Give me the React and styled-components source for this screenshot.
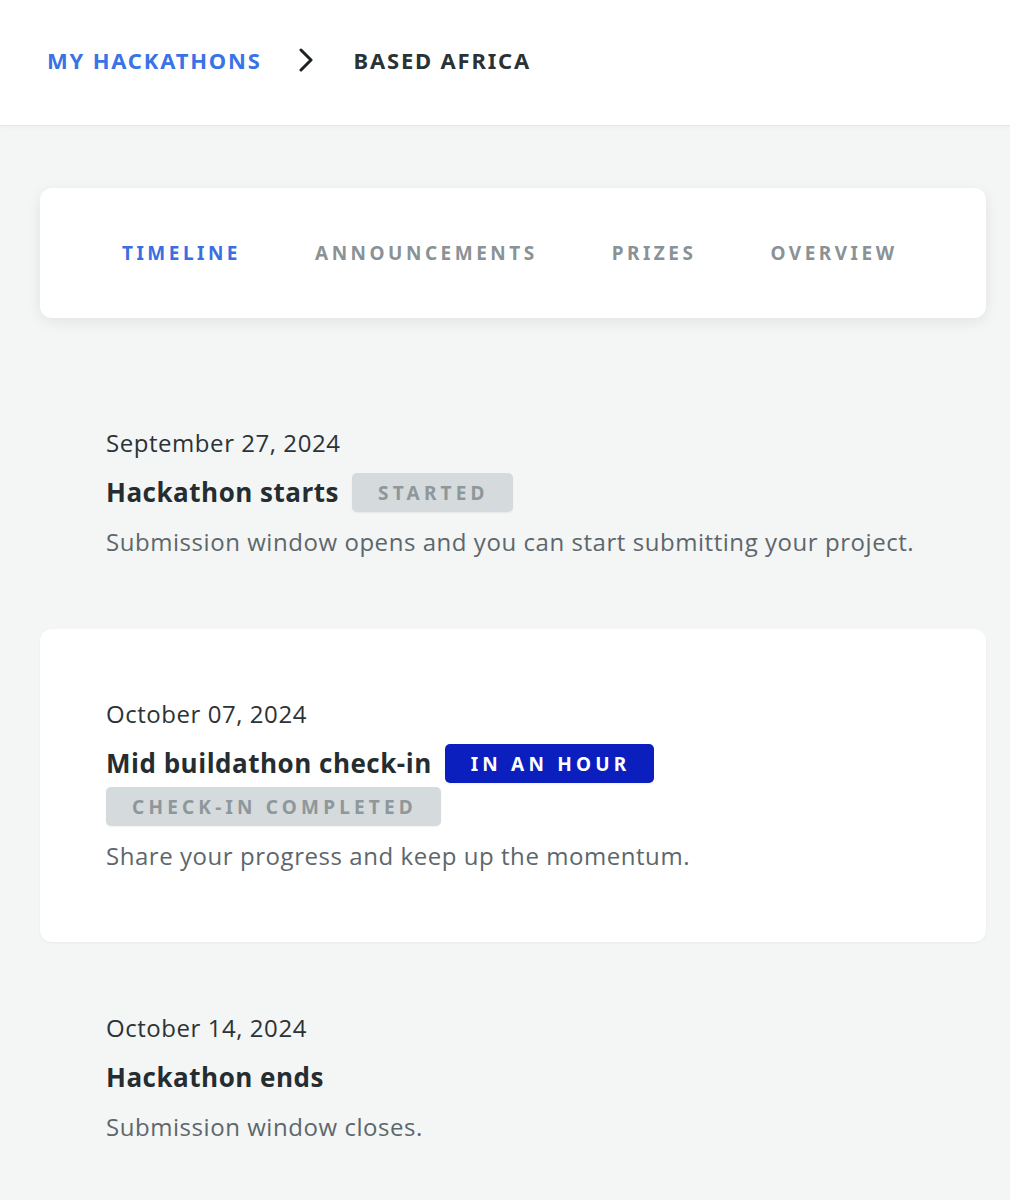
import React from "react";
import styled, { createGlobalStyle } from "styled-components";

const GlobalStyle = createGlobalStyle`
  html, body {
    margin: 0;
    padding: 0;
    background: #f4f5f5;
  }
  * {
    box-sizing: border-box;
  }
`;

const tabs = ["Timeline", "Announcements", "Prizes", "Overview"];

const events = [
  {
    date: "September 27, 2024",
    title: "Hackathon starts",
    badges: [{ label: "Started", tone: "muted" }],
    text: "Submission window opens and you can start submitting your project.",
  },
  {
    date: "October 07, 2024",
    title: "Mid buildathon check-in",
    badges: [
      { label: "In an hour", tone: "primary" },
      { label: "Check-in completed", tone: "muted" },
    ],
    text: "Share your progress and keep up the momentum.",
    active: true,
  },
  {
    date: "October 14, 2024",
    title: "Hackathon ends",
    badges: [],
    text: "Submission window closes.",
  },
];

const App = () => {
  return (
    <Page>
      <GlobalStyle />
      <Header>
        <Crumb $link>My Hackathons</Crumb>
        <Chevron width="16" height="24" viewBox="0 0 16 24">
          <polyline points="3,2 13,12 3,22" />
        </Chevron>
        <Crumb>Based Africa</Crumb>
      </Header>

      <Content>
        <TabBar>
          {tabs.map((tab, i) => (
            <Tab key={tab} $active={i === 0}>
              {tab}
            </Tab>
          ))}
        </TabBar>

        <Timeline>
          {events.map((ev) => (
            <Event key={ev.title} $active={ev.active}>
              <EventDate>{ev.date}</EventDate>
              <TitleRow>
                <EventTitle>{ev.title}</EventTitle>
                {ev.badges.map((b) => (
                  <Badge key={b.label} $tone={b.tone}>
                    {b.label}
                  </Badge>
                ))}
              </TitleRow>
              <EventText>{ev.text}</EventText>
            </Event>
          ))}
        </Timeline>
      </Content>
    </Page>
  );
};

export default App;

const Page = styled.div`
  min-height: 1200px;
  background: #f4f5f5;
`;

const Header = styled.header`
  display: flex;
  align-items: center;
  height: 126px;
  padding: 0 47px 6px;
  background: #ffffff;
  border-bottom: 1px solid #e6e8e8;
  box-shadow: 0 1px 4px rgba(0, 0, 0, 0.04);
`;

const Crumb = styled.span`
  font-family: "Noto Sans", "DejaVu Sans", sans-serif;
  font-weight: 700;
  font-size: 22px;
  letter-spacing: 1.8px;
  text-transform: uppercase;
  color: ${(p) => (p.$link ? "#3a73e6" : "#2a3235")};
`;

const Chevron = styled.svg`
  margin: 0 40px 0 36px;
  fill: none;
  stroke: #1d2224;
  stroke-width: 3;
  stroke-linecap: round;
  stroke-linejoin: round;
`;

const Content = styled.main`
  padding: 62px 24px 0 40px;
`;

const TabBar = styled.nav`
  display: flex;
  align-items: center;
  gap: 74px;
  height: 130px;
  padding: 0 82px;
  background: #ffffff;
  border-radius: 12px;
  box-shadow: 0 4px 14px rgba(30, 40, 45, 0.08);
`;

const Tab = styled.span`
  font-family: "Noto Sans", "DejaVu Sans", sans-serif;
  font-weight: 700;
  font-size: 19px;
  letter-spacing: 3.5px;
  text-transform: uppercase;
  color: ${(p) => (p.$active ? "#3a6fe2" : "#8a9296")};
`;

const Timeline = styled.section`
  display: flex;
  flex-direction: column;
  gap: 1px;
  margin-top: 40px;
`;

const Event = styled.article`
  padding: 70px 66px 71px;
  border-radius: 12px;
  background: ${(p) => (p.$active ? "#ffffff" : "transparent")};
  box-shadow: ${(p) =>
    p.$active ? "0 1px 3px rgba(30, 40, 45, 0.05)" : "none"};
`;

const EventDate = styled.div`
  font-family: "Open Sans", "Noto Sans", sans-serif;
  font-size: 24px;
  line-height: 30px;
  letter-spacing: 0.55px;
  color: #2b3336;
`;

const TitleRow = styled.div`
  display: flex;
  flex-wrap: wrap;
  align-items: center;
  column-gap: 13px;
  row-gap: 4px;
  margin-top: 15px;
`;

const EventTitle = styled.h3`
  margin: 0;
  font-family: "Open Sans", "Noto Sans", sans-serif;
  font-weight: 700;
  font-size: 26px;
  line-height: 39px;
  letter-spacing: 0.5px;
  color: #252d30;
`;

const Badge = styled.span`
  display: inline-flex;
  align-items: center;
  height: 39px;
  padding: 0 24px 0 26px;
  border-radius: 5px;
  font-family: "Noto Sans", "DejaVu Sans", sans-serif;
  font-weight: 700;
  font-size: 19px;
  letter-spacing: 4.2px;
  text-transform: uppercase;
  background: ${(p) => (p.$tone === "primary" ? "#0a1fbd" : "#d5dadc")};
  color: ${(p) => (p.$tone === "primary" ? "#ffffff" : "#8e979a")};
  box-shadow: 0 1px 2px rgba(0, 0, 0, 0.06);
`;

const EventText = styled.p`
  margin: 15px 0 0;
  font-family: "Open Sans", "Noto Sans", sans-serif;
  font-size: 24px;
  line-height: 30px;
  letter-spacing: 0.55px;
  color: #5d676b;
`;
